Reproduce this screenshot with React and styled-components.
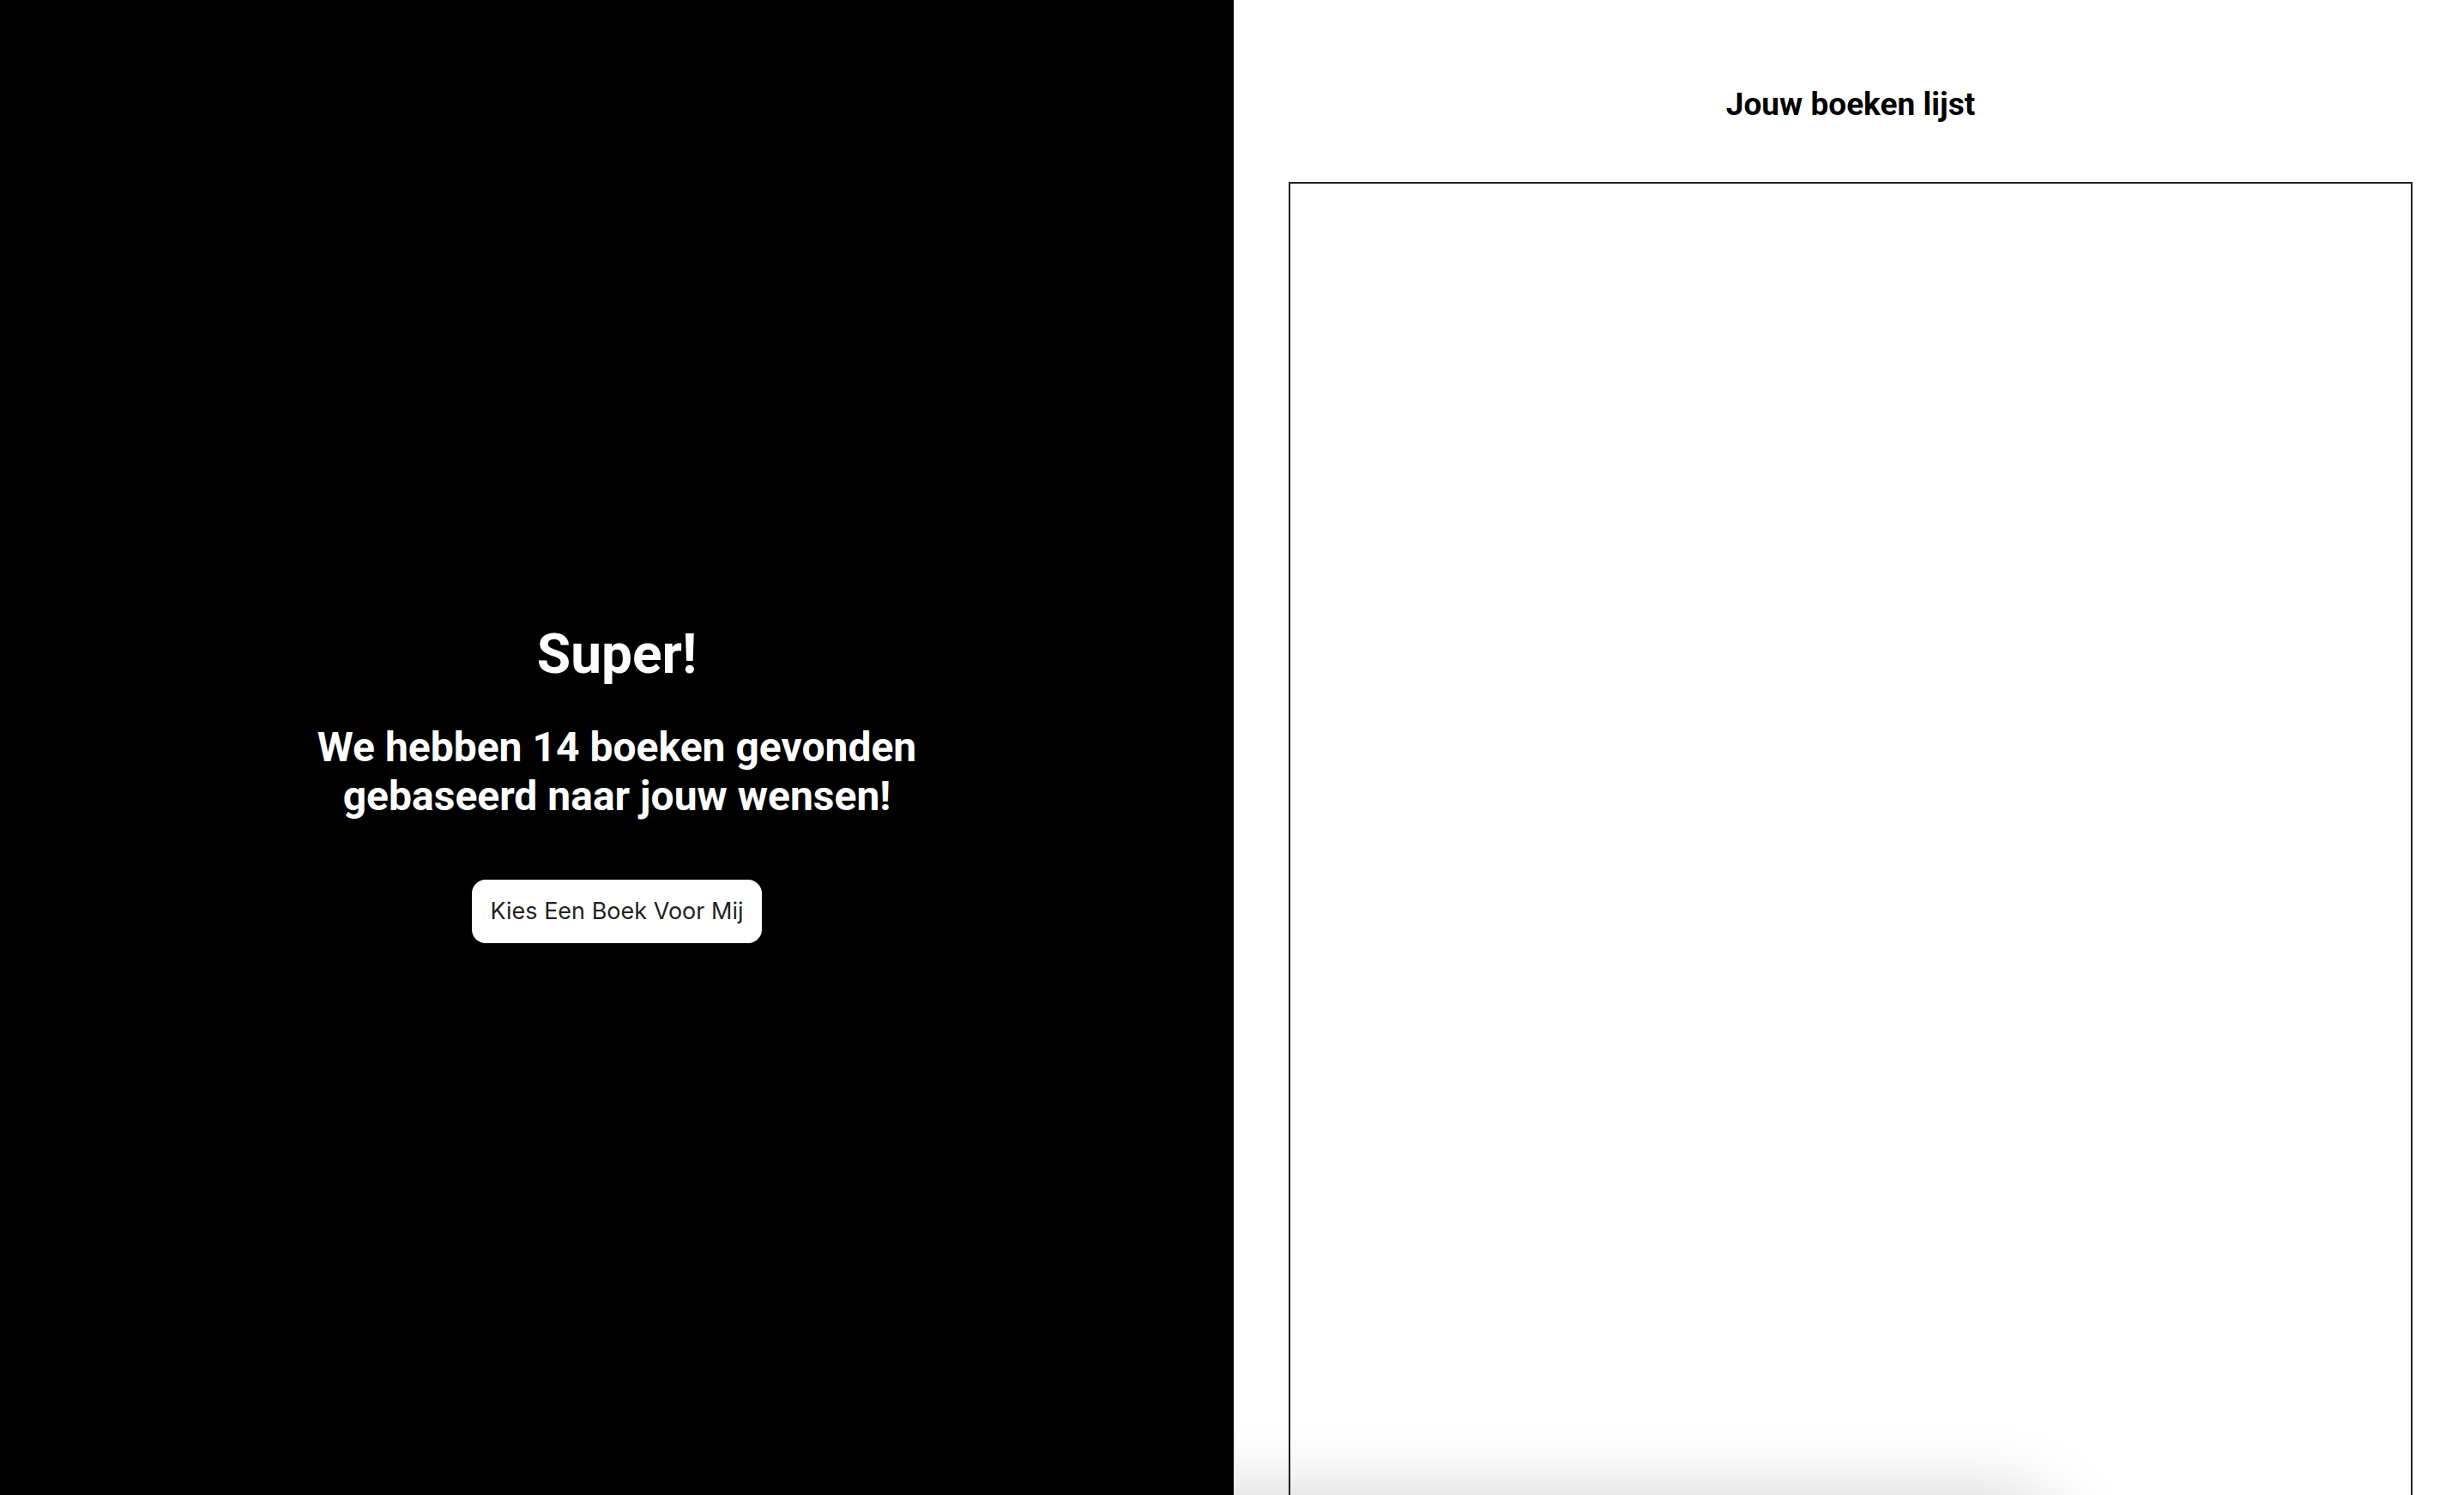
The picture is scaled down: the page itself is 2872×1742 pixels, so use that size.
import React from 'react'
import styled, { createGlobalStyle } from 'styled-components'

const GlobalStyle = createGlobalStyle`
  html, body {
    margin: 0;
    padding: 0;
    background: #fff;
    overflow: hidden;
  }
  * {
    box-sizing: border-box;
  }
`

const Page = styled.div`
  display: flex;
  width: 100vw;
  height: 100vh;
  overflow: hidden;
  font-family: Roboto, "Liberation Sans", sans-serif;
`

const IntroPanel = styled.section`
  width: 1438px;
  flex-shrink: 0;
  background: #000;
  color: #fff;
  display: flex;
  flex-direction: column;
  align-items: center;
  justify-content: center;
  padding-top: 81px;
  text-align: center;
`

const Title = styled.h1`
  margin: 0;
  font-size: 64px;
  font-weight: 700;
  line-height: normal;
`

const Subtitle = styled.h2`
  margin: 42px 0 0;
  font-size: 48px;
  font-weight: 700;
  line-height: normal;
`

const PickButton = styled.button`
  margin-top: 69px;
  height: 74px;
  padding: 0 21px;
  border: none;
  border-radius: 16px;
  background: #fff;
  color: #222;
  font-family: Inter, "Liberation Sans", sans-serif;
  font-size: 27px;
  cursor: pointer;
`

const ListPanel = styled.section`
  flex: 1;
  display: flex;
  flex-direction: column;
  padding: 100px 60px 0 64px;
`

const ListTitle = styled.h3`
  margin: 0;
  text-align: center;
  font-size: 37px;
  font-weight: 700;
  line-height: normal;
  color: #000;
`

const BookList = styled.div`
  margin-top: 69px;
  height: 1600px;
  flex-shrink: 0;
  border: 2px solid #222;
`

const BottomShade = styled.div`
  position: fixed;
  left: 1300px;
  top: calc(100vh + 6px);
  width: 1100px;
  height: 120px;
  border-radius: 60px;
  background: #fff;
  box-shadow: 0 0 90px 0 rgba(0, 0, 0, 0.2);
  pointer-events: none;
`

export default function App() {
  return (
    <>
      <GlobalStyle />
      <Page>
        <IntroPanel>
          <Title>Super!</Title>
          <Subtitle>
            We hebben 14 boeken gevonden
            <br />
            gebaseerd naar jouw wensen!
          </Subtitle>
          <PickButton>Kies Een Boek Voor Mij</PickButton>
        </IntroPanel>
        <ListPanel>
          <ListTitle>Jouw boeken lijst</ListTitle>
          <BookList />
        </ListPanel>
      </Page>
      <BottomShade />
    </>
  )
}
